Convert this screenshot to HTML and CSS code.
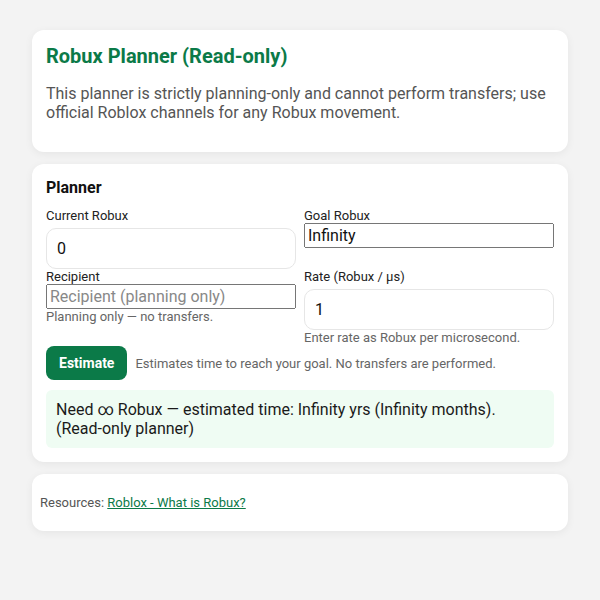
FILE: index.html
```html
<!DOCTYPE html>
<html lang="en">
<head>
  <meta charset="UTF-8">
  <meta name="viewport" content="width=device-width, initial-scale=1.0">
  <title>Robux Planner (Read-only)</title>
  <link rel="stylesheet" href="styles.css">
</head>
<body>
  <div class="page">
    <!-- Intro -->
    <section class="card">
      <h1>Robux Planner (Read-only)</h1>
      <p class="lead">This planner is strictly planning-only and cannot perform transfers; use official Roblox channels for any Robux movement.</p>
    </section>

    <!-- Planner -->
    <section class="card">
      <h2>Planner</h2>
      <div class="fields">
        <div class="field">
          <label for="current">Current Robux</label>
          <input class="box" type="number" id="current" value="0">
        </div>
        <div class="field">
          <label for="goal">Goal Robux</label>
          <input type="text" id="goal" value="Infinity">
        </div>
        <div class="field">
          <label for="recipient">Recipient</label>
          <input type="text" id="recipient" placeholder="Recipient (planning only)">
          <div class="hint">Planning only — no transfers.</div>
        </div>
        <div class="field">
          <label for="rate">Rate (Robux / μs)</label>
          <input class="box" type="number" id="rate" value="1">
          <div class="hint">Enter rate as Robux per microsecond.</div>
        </div>
      </div>
      <div class="actions">
        <button onclick="estimate()">Estimate</button>
        <span class="hint">Estimates time to reach your goal. No transfers are performed.</span>
      </div>
      <div class="result" id="result">Need ∞ Robux — estimated time: Infinity yrs (Infinity months). (Read-only planner)</div>
    </section>

    <!-- Resources -->
    <footer class="card footer">
      <p>Resources: <a href="#">Roblox - What is Robux?</a></p>
    </footer>
  </div>

  <script>
    // Estimate time to goal
    function estimate() {
      const current = Number(document.getElementById('current').value);
      const goal = Number(document.getElementById('goal').value);
      const rate = Number(document.getElementById('rate').value);
      const need = Math.max(goal - current, 0);
      const years = need / rate / 1e6 / 3600 / 24 / 365;
      const label = need === Infinity ? '∞' : need;
      document.getElementById('result').textContent =
        `Need ${label} Robux — estimated time: ${years} yrs (${years * 12} months). (Read-only planner)`;
    }
  </script>
</body>
</html>
```

FILE: styles.css
```css
/* Reset and Global Styles */
* {
  box-sizing: border-box;
}
body {
  margin: 0;
  font-family: Roboto, "Liberation Sans", Arial, sans-serif;
  color: #222;
  background-color: #f3f3f3;
}
.page {
  padding: 30px 32px;
}

/* Cards */
.card {
  background-color: #fff;
  border-radius: 12px;
  padding: 14px;
  margin-bottom: 12px;
  box-shadow: 0 2px 8px rgba(0, 0, 0, 0.06);
}
.card h1 {
  margin: 0;
  font-size: 20px;
  color: #0b7a48;
}
.card .lead {
  margin: 16px 0;
  font-size: 16px;
  color: #555;
}
.card h2 {
  margin: 0 0 11px;
  font-size: 16px;
  color: #111;
}

/* Fields */
.fields {
  display: grid;
  grid-template-columns: 1fr 1fr;
  column-gap: 8px;
}
.field label {
  display: block;
  font-size: 13px;
  color: #222;
}
.field input {
  display: block;
  width: 100%;
  font-family: inherit;
  font-size: 16px;
  color: #111;
}
.field input.box {
  margin-top: 5px;
  padding: 10px;
  border: 1px solid #e6e6e6;
  border-radius: 10px;
  outline: none;
}
.field input::placeholder {
  color: #888;
}
.hint {
  font-size: 13px;
  color: #666;
}

/* Actions */
.actions {
  display: flex;
  align-items: center;
  gap: 8px;
  margin-top: 1px;
}
.actions button {
  padding: 9px 13px;
  border: none;
  border-radius: 8px;
  background-color: #0b7a48;
  color: #fff;
  font-family: inherit;
  font-size: 14px;
  font-weight: bold;
  cursor: pointer;
}
.actions button:hover {
  background-color: #096a3e;
}
.result {
  margin-top: 10px;
  padding: 10px;
  background-color: #effcf3;
  border-radius: 6px;
  font-size: 16px;
  line-height: 1.2;
  color: #1a1a1a;
}

/* Footer */
.footer {
  padding: 8px;
}
.footer p {
  margin: 13px 0;
  font-size: 13px;
  color: #555;
}
.footer a {
  color: #0b7a48;
}
```
